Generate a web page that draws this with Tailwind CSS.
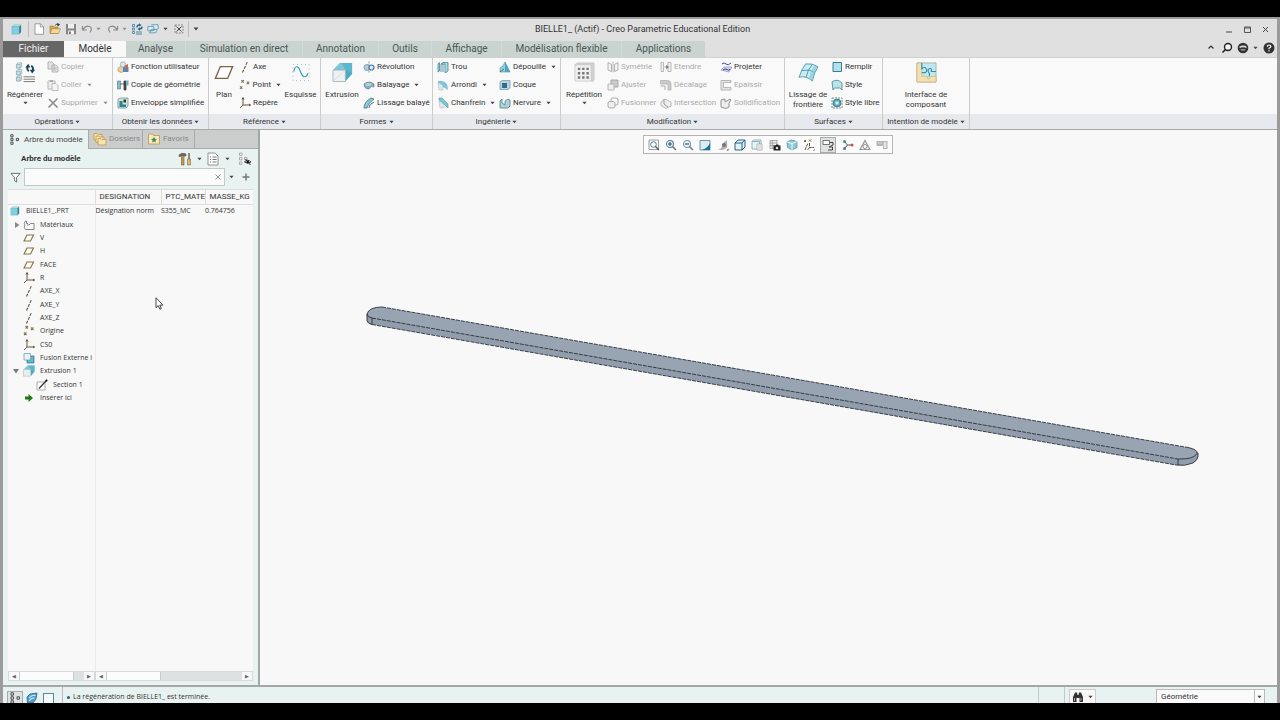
<!DOCTYPE html>
<html lang="fr">
<head>
<meta charset="utf-8">
<title>BIELLE1_ (Actif) - Creo Parametric Educational Edition</title>
<script src="https://cdn.jsdelivr.net/npm/@tailwindcss/browser@4"></script>
</head>
<body class="h-screen overflow-hidden bg-black py-[17px] font-[Roboto,'Noto_Sans',sans-serif] text-[8px] leading-[10px] text-[#333]">

<!-- Icon library -->
<svg class="hidden" aria-hidden="true">
  <symbol id="caret" viewBox="0 0 6 4"><path d="M.5.5h5L3 3.500z" fill="#444"/></symbol>
  <symbol id="cube" viewBox="0 0 12 12"><path d="M1 3l2-2h8l-2 2z" fill="#b9e6ef" stroke="#5aa9bd" stroke-width=".5"/><path d="M1 3h8v8H1z" fill="#7fd0e2" stroke="#5aa9bd" stroke-width=".5"/><path d="M9 3l2-2v8l-2 2z" fill="#2f7f97"/></symbol>
  <symbol id="new" viewBox="0 0 12 12"><path d="M2 .8h5.500l3 3v7.500H2z" fill="#fff" stroke="#888" stroke-width=".8"/><path d="M7.300.8v3.200h3.200" fill="none" stroke="#888" stroke-width=".8"/></symbol>
  <symbol id="open" viewBox="0 0 12 12"><path d="M1 10.500V3h3.500l1 1H9v6.500z" fill="#d9a94c" stroke="#8b6a2c" stroke-width=".5"/><path d="M1 10.500l2-4.800h8.500L9.500 10.500z" fill="#f3d794" stroke="#9a762f" stroke-width=".5"/><path d="M6 2.500Q7 .8 9 1.300M8.300.3l2.500 1.200-2 1.600z" fill="#333" stroke="#333" stroke-width=".5"/></symbol>
  <symbol id="save" viewBox="0 0 12 12"><path d="M1 1h10v10.300H1z" fill="#868686"/><path d="M3 1h6v4.500H3z" fill="#eee"/><path d="M3.200 7.500h5.800v3.800H3.200z" fill="#f4f4f4"/><path d="M4.200 8.500h1.500v2.500H4.200z" fill="#555"/></symbol>
  <symbol id="undo" viewBox="0 0 12 12"><path d="M1.500 3v4h4.300M2 6.500Q5 2 8.500 3.500T9 9.500" fill="none" stroke="#8b8b8b" stroke-width="1.200"/></symbol>
  <symbol id="redo" viewBox="0 0 12 12"><path d="M10.500 3v4H6.200M10 6.500Q7 2 3.500 3.500T3 9.500" fill="none" stroke="#8b8b8b" stroke-width="1.200"/></symbol>
  <symbol id="regen" viewBox="0 0 22 22"><g fill="#c3e3ea" stroke="#7b97a0" stroke-width=".7"><path d="M1.500 2.500h4v4h-4zM1.500 9.500h4v4h-4zM1.500 16h4v4h-4z"/><path d="M1.500 2.500L3 1h4v4L5.500 6.500M1.500 9.500L3 8h4v4l-1.500 1.500M1.500 16L3 14.500h4v4L5.500 20" fill="none"/></g><path d="M9 15.500h12M9 18h12M9 20.500h12" stroke="#777" stroke-width="1"/><path d="M13.500 4.500a3.500 3.500 0 0 0 1 5M18 9.500a3.500 3.500 0 0 0-1-5.500" fill="none" stroke="#17465a" stroke-width="2"/><path d="M10.800 5.800l3.200-4 2 4zM15.500 8h5.500l-3 4z" fill="#17465a"/></symbol>
  <symbol id="regensmall" viewBox="0 0 12 12"><path d="M1.500 1.500h2v2h-2zM1.500 5h2v2h-2zM1.500 8.500h2v2h-2z" fill="#d7edf3" stroke="#3c7f98" stroke-width=".8"/><path d="M5 9h6M5 11h6" stroke="#3c7f98" stroke-width=".9"/><path d="M6 4.500Q6 2 8.500 2M11 3.500Q11 6 8.500 6" fill="none" stroke="#226a88" stroke-width="1.400"/><path d="M8 .3l2.500 1.700L8 3.700zM9 4.300L6.500 6 9 7.700z" fill="#226a88"/></symbol>
  <symbol id="windows" viewBox="0 0 14 12"><path d="M1 3h7v5H1zM5 1h8v5M3 10.500h7l2-4H5z" fill="#d7edf3" stroke="#3c7f98" stroke-width=".8"/></symbol>
  <symbol id="closewin" viewBox="0 0 10 10"><path d="M1 1h8v8H1z" fill="none" stroke="#777" stroke-width=".8" stroke-dasharray="2 1"/><path d="M2.500 2.500l5 5M7.500 2.500l-5 5" stroke="#444" stroke-width="1"/></symbol>
  <symbol id="copy" viewBox="0 0 12 12"><path d="M1 1h4l2 2v5H1zM5 4h4l2 2v5H5z" fill="#e3e3e3" stroke="#b0b0b0" stroke-width=".9"/><path d="M6.500 7h3M6.500 9h3" stroke="#aaa" stroke-width=".7"/></symbol>
  <symbol id="paste" viewBox="0 0 12 12"><path d="M1 2h7v8H1z" fill="#eee" stroke="#b5b5b5"/><path d="M3 1h3v2H3z" fill="#aaa"/><path d="M5 4.500h4l2 2v5H5z" fill="#f4f4f4" stroke="#b0b0b0" stroke-width=".8"/></symbol>
  <symbol id="del" viewBox="0 0 12 12"><path d="M2 2l8.500 8.500M10.500 1.500L1.500 10.500" stroke="#8e8e8e" stroke-width="1.700"/></symbol>
  <symbol id="udf" viewBox="0 0 12 12"><path d="M1 7l3-2 4 1v4l-4 1.500L1 10z" fill="#e9cf9a" stroke="#b38e4a" stroke-width=".6"/><circle cx="6" cy="3.500" r="2.700" fill="#dce6ee" stroke="#7f94a5" stroke-width=".6"/><path d="M6 6h5.500v5H6z" fill="#5b86b8"/><path d="M7 5l4-2v5" fill="#c56a4f"/></symbol>
  <symbol id="cgeom" viewBox="0 0 12 12"><path d="M.5 2h3v8h-3z" fill="#88bac7" stroke="#42616b" stroke-width=".5"/><path d="M3.500 5h4M7 2h2v9H7z" fill="#444" stroke="#444" stroke-width=".8"/><path d="M9.500 1.500h2v5h-2z" fill="#5cb2c9"/></symbol>
  <symbol id="env" viewBox="0 0 12 12"><path d="M1 2l2-1h8v8l-2 2H1z" fill="#d6e6c8" stroke="#5e9aa6" stroke-width=".8"/><path d="M2.500 4h3v3.500H9V10H2.500z" fill="#2d7fa0"/><path d="M6.500 2.500h2.500v3H6.500z" fill="#334"/></symbol>
  <symbol id="plane" viewBox="0 0 22 18"><path d="M7 2.500h13.500L15 15.500H1.500z" fill="#fff" stroke="#7a6546" stroke-width="1.500"/></symbol>
  <symbol id="axis" viewBox="0 0 12 12"><path d="M3.500 11.500L8.500.5" stroke="#5f5540" stroke-width="1.100" stroke-dasharray="3 1.200"/></symbol>
  <symbol id="pts" viewBox="0 0 12 12"><path d="M2.500 1l2.500 2.500M5 1L2.500 3.500M8 2.500l2.500 2.500M10.500 2.500L8 5M1 7.500L3.500 10M3.500 7.500L1 10" stroke="#857651" stroke-width="1.100"/></symbol>
  <symbol id="csys" viewBox="0 0 12 12"><path d="M4 1v7h7.500M4 8l-3 3M3 2.500L4 .5l1 2M10 7l1.500 1-1.500 1" fill="none" stroke="#66563c" stroke-width="1"/></symbol>
  <symbol id="sketch" viewBox="0 0 20 20"><path d="M1 1h18v18H1z" fill="none" stroke="#8aa" stroke-width="1" stroke-dasharray="1 3.500"/><path d="M2 9C3 2 7 2 9 8s5 10 9 3" fill="none" stroke="#3b9ec0" stroke-width="1.300"/></symbol>
  <symbol id="extrude" viewBox="0 0 22 22"><path d="M1 8.500L8 1h13l-7 7.500z" fill="#7cc6d8"/><path d="M14 8.500L21 1v11.500l-7 8z" fill="#4fa9c2"/><path d="M10 1h11v10.500L14 8.500z" fill="#5cb6cc"/><path d="M1 8.500h13V20.500H1z" fill="#eef1f2" stroke="#9aa" stroke-width=".8"/><path d="M1 20.500l13-12" stroke="#cdd6d8" stroke-width=".7"/></symbol>
  <symbol id="revolve" viewBox="0 0 12 12"><circle cx="4" cy="6.500" r="3" fill="#b7cde0" stroke="#6d8cab" stroke-width=".8"/><circle cx="8.500" cy="6.500" r="2.500" fill="#dbe8f5" stroke="#3f79b8" stroke-width="1.200"/><path d="M6 .5v11" stroke="#8a7a55" stroke-width=".8" stroke-dasharray="2 1"/></symbol>
  <symbol id="sweep" viewBox="0 0 12 12"><path d="M1 5q5-4 10 0v3q-3-2-5 2Q1 10 1 5z" fill="#7fb2c0" stroke="#5d7d88" stroke-width=".7"/><ellipse cx="5.500" cy="5.500" rx="3" ry="1.500" fill="#b9cfd5"/></symbol>
  <symbol id="blend" viewBox="0 0 12 12"><path d="M1 11Q1 5 8 1l3 1Q5 6 4 11z" fill="#8ec6d4" stroke="#3f7484" stroke-width=".8"/><path d="M6 11q0-4 5-6" fill="none" stroke="#3f7484"/></symbol>
  <symbol id="hole" viewBox="0 0 12 12"><path d="M1 3l1.500-1.500V10L1 11zM4 3l2-1.500h5V10L9 11.500H8V3z" fill="#a5dbe7" stroke="#39788a" stroke-width=".7"/><path d="M4 3v8M6 3v8" stroke="#39788a" stroke-width=".8"/></symbol>
  <symbol id="round" viewBox="0 0 12 12"><path d="M1 2h4q6 1 6 9L6 8Q6 5 1 4z" fill="#7cc5d6"/><path d="M1 4q5 1 5 4v3H2z" fill="#dfe7ea" stroke="#aab" stroke-width=".5"/></symbol>
  <symbol id="chamf" viewBox="0 0 12 12"><path d="M2 1h3l6 6v4L6 6 2 3z" fill="#7cc5d6" stroke="#4d98ab" stroke-width=".6"/><path d="M2 4l5 4v3H3z" fill="#e1e8ea" stroke="#aab" stroke-width=".5"/></symbol>
  <symbol id="draft" viewBox="0 0 12 12"><path d="M1 11V7l3-2 2-4 5 10z" fill="#8fcfdf" stroke="#4c8d9e" stroke-width=".6"/><path d="M6 1l5 10H6z" fill="#4fa5bb"/><path d="M1 11l4-3" stroke="#766"/></symbol>
  <symbol id="shell" viewBox="0 0 12 12"><path d="M1 3l2-1.500h8V9l-2 1.500H1z" fill="#b3d8e2" stroke="#7d99a4" stroke-width=".8"/><path d="M3 4h5v5H3z" fill="#356a8c"/></symbol>
  <symbol id="rib" viewBox="0 0 12 12"><path d="M1 4l2-2v4l3 2V4l3-2 2 1v6l-2 2H1z" fill="#a9d3dc" stroke="#54808c" stroke-width=".8"/></symbol>
  <symbol id="pattern" viewBox="0 0 22 22"><path d="M1 3l2-2h18v18l-2 2" fill="#d3d3d3" stroke="#c0c0c0" stroke-width=".8"/><path d="M1 3h17v17H1z" fill="#f0f0f0" stroke="#c5c5c5" stroke-width=".8"/><path d="M4 6h2.500v2.500H4zM8.500 6H11v2.500H8.500zM13 6h2.500v2.500H13zM4 10.500h2.500V13H4zM8.500 10.500H11V13H8.500zM13 10.500h2.500V13H13zM4 15h2.500v2.500H4zM8.500 15H11v2.500H8.500zM13 15h2.500v2.500H13z" fill="#777"/></symbol>
  <symbol id="mirror" viewBox="0 0 12 12"><path d="M1 1.500l3.500 2v7L1 9zM11 1.500l-3.500 2v7L11 9z" fill="#f3f3f3" stroke="#aaa" stroke-width=".9"/><path d="M6 .5v11" stroke="#aaa" stroke-width=".8"/></symbol>
  <symbol id="trim" viewBox="0 0 12 12"><path d="M4 1h7v7H4z" fill="#ccc" stroke="#999" stroke-width=".8"/><path d="M1 5h6v6H1z" fill="#eee" stroke="#aaa" stroke-width=".8"/></symbol>
  <symbol id="merge" viewBox="0 0 12 12"><rect x="4" y="1" width="7" height="7" rx="2" fill="none" stroke="#aaa"/><rect x="1" y="4.500" width="7" height="6.500" rx="2" fill="#eee" stroke="#aaa"/></symbol>
  <symbol id="extend" viewBox="0 0 12 12"><path d="M1 1.500h2.500v9H1zM8 1.500h3v9H8z" fill="#f0f0f0" stroke="#aaa" stroke-width=".8"/><path d="M4.500 6h3M6.500 4.500L8.500 6 6.500 7.500z" fill="#777" stroke="#777" stroke-width=".7"/></symbol>
  <symbol id="offset" viewBox="0 0 12 12"><path d="M.5 1.500h7q3.500 0 3.500 3.500v6H8V5H.5z" fill="#ccc" stroke="#aaa" stroke-width=".7"/><path d="M.5 7H5v4" fill="none" stroke="#aaa"/></symbol>
  <symbol id="inter" viewBox="0 0 12 12"><path d="M1 5l4-3 6 3v4l-5 2.500-5-3z" fill="#eee" stroke="#aaa" stroke-width=".8"/><path d="M4 2v5l4 3" fill="none" stroke="#999"/></symbol>
  <symbol id="project" viewBox="0 0 12 12"><path d="M2 3q2-2 4 0t5-1" fill="none" stroke="#3c4fa0" stroke-width="1"/><path d="M1 9l3-3h8L9 11z" fill="#dedff2" stroke="#777bb0" stroke-width=".6"/><path d="M3 9q2-2 4-.5T10 8" fill="none" stroke="#333a80"/></symbol>
  <symbol id="thick" viewBox="0 0 12 12"><path d="M1 1.500h10v2H3.500v5H11v2.500H1z" fill="#e3e3e3" stroke="#aaa" stroke-width=".8"/></symbol>
  <symbol id="solid" viewBox="0 0 12 12"><path d="M1 3l4-1v3l5-3 1 1-2 3v4l-3 1.500L1 10z" fill="#eee" stroke="#888" stroke-width=".9"/></symbol>
  <symbol id="bound" viewBox="0 0 22 22"><path d="M1 16Q4 7 8 2q7-1 13 3-4 5-6 15-6-6-14-4z" fill="#c9ecf3" stroke="#4591a5" stroke-width=".9"/><path d="M4 9q8-2 14 2M8.500 16Q10 8 15 2.500" fill="none" stroke="#4591a5" stroke-width=".9"/><path d="M15 20q2-10 6-15l-3-1.500q-5 5-6.500 13.500z" fill="#79c7d9" opacity=".6"/></symbol>
  <symbol id="fill" viewBox="0 0 12 12"><path d="M2 1.500h8.500v9H2z" fill="#aee1eb" stroke="#3e7d8c" stroke-width="1"/></symbol>
  <symbol id="style" viewBox="0 0 12 12"><path d="M1 3q5-4 10 1v7Q9 8 6 9q-3-1-4 2z" fill="#b9e4ec" stroke="#538c9a" stroke-width=".9"/></symbol>
  <symbol id="free" viewBox="0 0 12 12"><path d="M1 1h10v10H1z" fill="none" stroke="#577" stroke-width=".8" stroke-dasharray="2 1"/><circle cx="6" cy="6" r="4" fill="#59a9bd" stroke="#2f6b7c" stroke-width=".7"/><path d="M4.500 4.500h3v3h-3z" fill="#d6eef3"/></symbol>
  <symbol id="puzzle" viewBox="0 0 22 22"><path d="M1 1h20v20H1z" fill="#bfe9f1" stroke="#8fa79d" stroke-width=".8"/><path d="M1 1h5v14h6q-1 3 1 3t1-3h7v6H1z" fill="#f4dfae" stroke="#c9ad70" stroke-width=".6"/><path d="M6 1v6q4-3 5 1t-5 3M21 10h-5q1-4-2-3t0 5v3" fill="none" stroke="#3d8ea4" stroke-width="1.200"/></symbol>
  <symbol id="tree" viewBox="0 0 12 12"><path d="M2 .8h2.400v2.400H2zM2 4.800h2.400v2.400H2zM2 8.800h2.400v2.400H2zM8 4.800h2.400v2.400H8z" fill="#fff" stroke="#444" stroke-width="1"/></symbol>
  <symbol id="folders" viewBox="0 0 14 14"><g fill="#f6e3b2" stroke="#c39541" stroke-width=".8"><path d="M1 1.500h3l1 1h4V8H1z"/><path d="M3 4h3l1 1h4v5.500H3z"/><path d="M5 6.500h3l1 1h4V13H5z"/></g></symbol>
  <symbol id="fav" viewBox="0 0 14 14"><path d="M1.500 2h4l1 1.500h6V12h-11z" fill="#f8e8bd" stroke="#c39541" stroke-width=".8"/><path d="M7 4.800l.9 2 2.100.2-1.600 1.400.5 2.100L7 9.400l-1.900 1.100.5-2.100L4 7l2.100-.2z" fill="#3f8a68"/></symbol>
  <symbol id="tools" viewBox="0 0 14 14"><path d="M1 3q3-3 7-1v2H6v9H3.500V4.500H1z" fill="#c69a4d" stroke="#6e5630" stroke-width=".6"/><path d="M1 3q3-3 7-1v2H1z" fill="#666"/><path d="M10 1h2v6h-2z" fill="#888"/><path d="M9.500 7h3v6h-3z" fill="#e0b964" stroke="#6e5630" stroke-width=".5"/></symbol>
  <symbol id="list" viewBox="0 0 14 14"><path d="M2 1h7l3 3v9H2z" fill="#fff" stroke="#888" stroke-width=".9"/><path d="M4 5h1M4 7.500h1M4 10h1M6.500 5h4M6.500 7.500h4M6.500 10h4" stroke="#777" stroke-width="1"/></symbol>
  <symbol id="hide" viewBox="0 0 14 14"><path d="M1.500 1h2.400v2.400H1.500zM1.500 5.500h2.400v2.400H1.500zM1.500 10h2.400v2.400H1.500zM6.500 5.500h2.400v2.400H6.500z" fill="#fff" stroke="#999" stroke-width=".8"/><path d="M6.500 10q3-3.500 6.500 0-3 2.500-6.500 0z" fill="#fff" stroke="#222" stroke-width=".9"/><circle cx="9.700" cy="10" r="1.300"/><path d="M7.500 7l5 6" stroke="#222" stroke-width=".9"/></symbol>
  <symbol id="funnel" viewBox="0 0 12 12"><path d="M1 1.500h10L7.200 6v5L5 9.500V6z" fill="#fff" stroke="#666" stroke-width="1"/></symbol>
  <symbol id="material" viewBox="0 0 12 12"><path d="M2.500 10.500q-2.500-2.500-.5-4.500-1.500-1.500 0-3.500L3.500 2v2.500h1.500M2.500 10.500h8.500V4.500H7.500L6 6H4" fill="#fdfdfd" stroke="#777" stroke-width=".9"/></symbol>
  <symbol id="tplane" viewBox="0 0 12 12"><path d="M4 3h6.500L7.500 9H1z" fill="#fffef5" stroke="#857245" stroke-width="1.100"/></symbol>
  <symbol id="fusion" viewBox="0 0 12 12"><path d="M5 4h6v7H4V8h1z" fill="#5eb9d3" stroke="#336f89" stroke-width=".7"/><path d="M1 1.500h6.500V8H1z" fill="#e8f4f7" stroke="#6a97a6" stroke-width=".7"/></symbol>
  <symbol id="section" viewBox="0 0 12 12"><path d="M1 3h8v8H1z" fill="#fff" stroke="#999" stroke-width=".8"/><path d="M3 9.500L10.500 1.500" stroke="#333" stroke-width="1.200"/><circle cx="10.500" cy="1.500" r="1"/></symbol>
  <symbol id="insert" viewBox="0 0 12 12"><path d="M2 4.500h3.500V2l4.500 4-4.500 4V7.500H2z" fill="#1d7a14"/></symbol>
  <symbol id="zoomfit" viewBox="0 0 12 12"><path d="M1 1h9.500v9.500H1z" fill="none" stroke="#888" stroke-width=".8"/><circle cx="5.500" cy="5.500" r="2.800" fill="#fff" stroke="#4b7f96"/><path d="M7.500 7.500l3.500 3.500" stroke="#555" stroke-width="1.300"/></symbol>
  <symbol id="zoomin" viewBox="0 0 12 12"><circle cx="5" cy="5" r="3.500" fill="#e7f3f7" stroke="#4b7f96" stroke-width="1.100"/><path d="M3 5h4M5 3v4" stroke="#205e7c" stroke-width="1.200"/><path d="M7.500 7.500L11 11" stroke="#777" stroke-width="1.500"/></symbol>
  <symbol id="zoomout" viewBox="0 0 12 12"><circle cx="5" cy="5" r="3.500" fill="#e7f3f7" stroke="#7798a5" stroke-width="1.100"/><path d="M3 5h4" stroke="#205e7c" stroke-width="1.200"/><path d="M7.500 7.500L11 11" stroke="#777" stroke-width="1.500"/></symbol>
  <symbol id="repaint" viewBox="0 0 12 12"><path d="M1 1.500h10v9.500H1z" fill="#d9edf4" stroke="#557f91" stroke-width=".8"/><path d="M11 4v7H3q6-2 8-7z" fill="#1f7196"/></symbol>
  <symbol id="render" viewBox="0 0 12 12"><path d="M1 10q4 0 4-3V5l5-4v4q1 3-1 4.500Q5 12 1 10z" fill="#b0b0b0"/><circle cx="7" cy="6" r="2" fill="#777"/><path d="M9.500 11.500h2v-2z" fill="#333"/></symbol>
  <symbol id="views" viewBox="0 0 12 12"><path d="M1 4l3-3h7v7l-3 3H1zM1 4h7v7M8 4l3-3" fill="#dff1f6" stroke="#27657f" stroke-width="1"/></symbol>
  <symbol id="saved" viewBox="0 0 12 12"><path d="M1 2.500L2.500 1H10v5M1 2.500h7.500V10H1z" fill="#e7f4f7" stroke="#7ba6b3" stroke-width=".8"/><path d="M6 5h5v6H6z" fill="#fff" stroke="#999" stroke-width=".7"/><path d="M7 7h3M7 9h3" stroke="#999" stroke-width=".6"/></symbol>
  <symbol id="camera" viewBox="0 0 12 12"><path d="M1 1.500h7v8H1zM1 4h7M1 6.500h7M3.300 1.500v8" fill="#f3f3f3" stroke="#888" stroke-width=".7"/><path d="M4.500 6.500h2l.7-1h2l.6 1h1.700V11.500h-7z" fill="#222"/><circle cx="8" cy="9" r="1.300" fill="#ddd"/></symbol>
  <symbol id="persp" viewBox="0 0 12 12"><path d="M1 3l4-2 6 1.500v6L6 11 1.500 8.500z" fill="#8fc8d8" stroke="#5a93a5" stroke-width=".8"/><path d="M1 3l5 1.500 5-2M6 4.500V11" fill="none" stroke="#fff" stroke-width=".9"/></symbol>
  <symbol id="datum" viewBox="0 0 12 12"><path d="M1 1l2 2M3 1L1 3M6 .5l2 2M8 .5l-2 2" stroke="#857242" stroke-width="1"/><path d="M2 11l3-7M6.500 4v4.500H11M6.500 8.500l-2 2.500" fill="none" stroke="#5c5038" stroke-width="1" stroke-dasharray="3 .7"/><path d="M10 11.500h1.500V10z" fill="#333"/></symbol>
  <symbol id="annot" viewBox="0 0 12 12"><path d="M1 1.500h6.500v4H1z" fill="#fff" stroke="#555" stroke-width=".8"/><path d="M7.500 3.500H11V6L7 8h3.500v3H6" fill="none" stroke="#444" stroke-width="1"/></symbol>
  <symbol id="spin" viewBox="0 0 12 12"><path d="M2 2l3.500 4M5.500 6H10M5.500 6L2 10" stroke="#555" stroke-width="1"/><circle cx="2.500" cy="2.500" r="1.500" fill="#3c9a72"/><circle cx="10" cy="6" r="1.500" fill="#c75050"/><circle cx="2.500" cy="9.500" r="1.500" fill="#4b83a5"/></symbol>
  <symbol id="tri" viewBox="0 0 12 12"><path d="M6 1.500L11 10.500H1z" fill="#eee" stroke="#999" stroke-width="1.200"/><circle cx="6" cy="7.500" r="2" fill="#fff" stroke="#888" stroke-width=".9"/></symbol>
  <symbol id="play" viewBox="0 0 12 12"><path d="M.5 2h11v8H7V7H.5z" fill="#b5b5b5"/><path d="M2 4h4M8 3.500h2v5H8z" stroke="#eee" fill="#ddd" stroke-width=".7"/></symbol>
  <symbol id="web" viewBox="0 0 12 12"><path d="M1 5l3-3 7-1-1 6-3 4H1.500z" fill="#4f9ecb" stroke="#27658e" stroke-width=".8"/><path d="M3 6q3-3.500 6.500-2.500M3.500 9q1-3 5-3" fill="none" stroke="#d5ecf7" stroke-width="1.100"/></symbol>
  <symbol id="binoc" viewBox="0 0 12 12"><path d="M1 11V6l2-4.500h2L5.500 4h1L7 1.500h2L11 6v5H7.500V7h-3v4z" fill="#333"/><path d="M2.500 7v3M9 7v3" stroke="#aaa" stroke-width="1"/></symbol>
</svg>

<div class="flex h-full flex-col border-x-[3px] border-t-2 border-[#9b9b9b] bg-[#f8f8f8]">

  <!-- Title bar -->
  <header class="flex h-[22px] shrink-0 items-center bg-[#e0e0e0] pr-2 pb-0.5">
    <div class="flex w-[216px] items-center">
      <svg class="ml-2 size-[11px]"><use href="#cube"/></svg>
      <span class="ml-1.5 h-4 w-px bg-[#bbb]"></span>
      <button class="ml-1" aria-label="Nouveau"><svg class="size-3"><use href="#new"/></svg></button>
      <button class="ml-1" aria-label="Ouvrir"><svg class="size-3"><use href="#open"/></svg></button>
      <button class="ml-1" aria-label="Enregistrer"><svg class="size-3"><use href="#save"/></svg></button>
      <button class="ml-1 flex items-center gap-[3px]" aria-label="Annuler"><svg class="size-3"><use href="#undo"/></svg><svg class="h-1 w-[5px] opacity-50"><use href="#caret"/></svg></button>
      <button class="ml-1.5 flex items-center gap-[3px]" aria-label="Rétablir"><svg class="size-3"><use href="#redo"/></svg><svg class="h-1 w-[5px] opacity-50"><use href="#caret"/></svg></button>
      <button class="ml-1" aria-label="Régénérer"><svg class="size-3"><use href="#regensmall"/></svg></button>
      <button class="ml-1 flex items-center gap-1" aria-label="Fenêtres"><svg class="h-3 w-3"><use href="#windows"/></svg><svg class="h-1 w-[5px]"><use href="#caret"/></svg></button>
      <button class="ml-1.5" aria-label="Fermer la fenêtre"><svg class="size-2.5"><use href="#closewin"/></svg></button>
      <span class="ml-1 h-4 w-px bg-[#bbb]"></span>
      <button class="ml-1" aria-label="Personnaliser"><svg class="h-1 w-1.5"><use href="#caret"/></svg></button>
    </div>
    <h1 class="flex-1 pr-40 text-center text-[9px]">BIELLE1_ (Actif) - Creo Parametric Educational Edition</h1>
    <div class="flex items-center gap-[11px]">
      <button aria-label="Réduire"><svg class="size-[7px]" viewBox="0 0 7 7"><path d="M0 6h6" stroke="#444"/></svg></button>
      <button aria-label="Agrandir"><svg class="size-[7px]" viewBox="0 0 7 7"><path d="M.5 1h6v5.500h-6z M.5 2h6" fill="none" stroke="#555"/></svg></button>
      <button aria-label="Fermer"><svg class="size-[7px]" viewBox="0 0 7 7"><path d="M1 1l5 5M6 1L1 6" stroke="#444"/></svg></button>
    </div>
  </header>

  <!-- Ribbon tabs -->
  <nav class="flex h-[17px] shrink-0 items-stretch border-b border-[#d0d0d0] bg-[#e0e0e0] text-[10px] text-[#4c5654]">
    <button class="w-[61px] bg-[#666] text-[#eee]">Fichier</button>
    <button class="w-[62px] bg-[#f8f8f8] text-[#333]">Modèle</button>
    <button class="w-[60px] border-r border-[#d3dbd8] bg-[#c9d3d0]">Analyse</button>
    <button class="w-[117px] border-r border-[#d3dbd8] bg-[#c9d3d0]">Simulation en direct</button>
    <button class="w-[76px] border-r border-[#d3dbd8] bg-[#c9d3d0]">Annotation</button>
    <button class="w-[53px] border-r border-[#d3dbd8] bg-[#c9d3d0]">Outils</button>
    <button class="w-[70px] border-r border-[#d3dbd8] bg-[#c9d3d0]">Affichage</button>
    <button class="w-[120px] border-r border-[#d3dbd8] bg-[#c9d3d0]">Modélisation flexible</button>
    <button class="w-[83px] bg-[#c9d3d0]">Applications</button>
    <div class="ml-auto flex items-center gap-1 pr-0.5 pb-[3px]">
      <button aria-label="Réduire le ruban"><svg class="size-2" viewBox="0 0 8 8"><path d="M1.500 4.500L4 2l2.500 2.500" fill="none" stroke="#333" stroke-width="1.200"/></svg></button>
      <button class="ml-0.5" aria-label="Rechercher"><svg class="size-3" viewBox="0 0 12 12"><circle cx="7" cy="5" r="3.500" fill="#f5f5f5" stroke="#222" stroke-width="1.400"/><path d="M4.500 7.500L1.500 10.500" stroke="#222" stroke-width="1.600"/></svg></button>
      <button aria-label="Communauté"><svg class="size-3" viewBox="0 0 12 12"><circle cx="6" cy="6" r="5.300" fill="#333"/><path d="M2.500 4.500q3.500-2 7 0V6q-3.500-1.500-7 0zM3 7.500q3 2 6 0" fill="#ddd"/></svg></button>
      <svg class="h-1 w-[5px]"><use href="#caret"/></svg>
      <button class="ml-px" aria-label="Aide"><svg class="size-3" viewBox="0 0 12 12"><circle cx="6" cy="6" r="5.500" fill="#333"/><path d="M4.300 4.800q0-1.800 1.800-1.800t1.700 1.600Q7.800 5.500 6 6.200v1M6 8.200v1.200" fill="none" stroke="#fff" stroke-width="1.200"/></svg></button>
    </div>
  </nav>

  <!-- Ribbon -->
  <div class="flex h-[72px] shrink-0 border-b border-[#a9a9a9] bg-[#f9f9f9]">
    <section class="flex w-[110px] flex-col border-r border-[#ccc]">
      <div class="flex flex-1">
        <button class="flex w-[44px] flex-col items-center pt-1"><svg class="size-[21px]"><use href="#regen"/></svg><span class="mt-[7px]">Régénérer</span><svg class="mt-px h-1 w-[5px]"><use href="#caret"/></svg></button>
        <div class="flex flex-col text-[#aaa]">
          <button class="flex h-[18px] items-center gap-0.5"><svg class="size-3"><use href="#copy"/></svg>Copier</button>
          <button class="flex h-[18px] items-center gap-0.5"><svg class="size-3"><use href="#paste"/></svg>Coller<svg class="ml-[3px] h-1 w-[5px] opacity-60"><use href="#caret"/></svg></button>
          <button class="flex h-[18px] items-center gap-0.5"><svg class="size-3"><use href="#del"/></svg>Supprimer<svg class="ml-[3px] h-1 w-[5px] opacity-60"><use href="#caret"/></svg></button>
        </div>
      </div>
      <button class="flex h-[15px] items-center justify-center gap-0.5 bg-[#e6e9ee]">Opérations<svg class="h-1 w-[5px]"><use href="#caret"/></svg></button>
    </section>
    <section class="flex w-24 flex-col border-r border-[#ccc]">
      <div class="flex flex-1 flex-col pl-1">
        <button class="flex h-[18px] items-center gap-0.5"><svg class="size-3"><use href="#udf"/></svg>Fonction utilisateur</button>
        <button class="flex h-[18px] items-center gap-0.5"><svg class="size-3"><use href="#cgeom"/></svg>Copie de géométrie</button>
        <button class="flex h-[18px] items-center gap-0.5"><svg class="size-3"><use href="#env"/></svg>Enveloppe simplifiée</button>
      </div>
      <button class="flex h-[15px] items-center justify-center gap-0.5 bg-[#e6e9ee]">Obtenir les données<svg class="h-1 w-[5px]"><use href="#caret"/></svg></button>
    </section>
    <section class="flex w-28 flex-col border-r border-[#ccc]">
      <div class="flex flex-1">
        <button class="flex w-[30px] flex-col items-center pt-1"><svg class="h-[21px] w-5"><use href="#plane"/></svg><span class="mt-[7px]">Plan</span></button>
        <div class="flex w-[42px] flex-col">
          <button class="flex h-[18px] items-center gap-0.5"><svg class="size-3"><use href="#axis"/></svg>Axe</button>
          <button class="flex h-[18px] items-center gap-0.5"><svg class="size-3"><use href="#pts"/></svg>Point<svg class="ml-[3px] h-1 w-[5px]"><use href="#caret"/></svg></button>
          <button class="flex h-[18px] items-center gap-0.5"><svg class="size-3"><use href="#csys"/></svg>Repère</button>
        </div>
        <button class="flex flex-1 flex-col items-center pt-1"><svg class="h-[21px] w-[18px]"><use href="#sketch"/></svg><span class="mt-[7px]">Esquisse</span></button>
      </div>
      <button class="flex h-[15px] items-center justify-center gap-0.5 bg-[#e6e9ee]">Référence<svg class="h-1 w-[5px]"><use href="#caret"/></svg></button>
    </section>
    <section class="flex w-28 flex-col border-r border-[#ccc]">
      <div class="flex flex-1">
        <button class="flex w-[42px] flex-col items-center pt-1"><svg class="size-[21px]"><use href="#extrude"/></svg><span class="mt-[7px]">Extrusion</span></button>
        <div class="flex flex-col">
          <button class="flex h-[18px] items-center gap-0.5"><svg class="size-3"><use href="#revolve"/></svg>Révolution</button>
          <button class="flex h-[18px] items-center gap-0.5"><svg class="size-3"><use href="#sweep"/></svg>Balayage<svg class="ml-[3px] h-1 w-[5px]"><use href="#caret"/></svg></button>
          <button class="flex h-[18px] items-center gap-0.5"><svg class="size-3"><use href="#blend"/></svg>Lissage balayé</button>
        </div>
      </div>
      <button class="flex h-[15px] items-center justify-center gap-0.5 bg-[#e6e9ee]">Formes<svg class="h-1 w-[5px]"><use href="#caret"/></svg></button>
    </section>
    <section class="flex w-32 flex-col border-r border-[#ccc]">
      <div class="flex flex-1 pl-1">
        <div class="flex w-[62px] flex-col">
          <button class="flex h-[18px] items-center gap-0.5"><svg class="size-3"><use href="#hole"/></svg>Trou</button>
          <button class="flex h-[18px] items-center gap-0.5"><svg class="size-3"><use href="#round"/></svg>Arrondi<svg class="ml-[3px] h-1 w-[5px]"><use href="#caret"/></svg></button>
          <button class="flex h-[18px] items-center gap-0.5"><svg class="size-3"><use href="#chamf"/></svg>Chanfrein<svg class="ml-[3px] h-1 w-[5px]"><use href="#caret"/></svg></button>
        </div>
        <div class="flex flex-col">
          <button class="flex h-[18px] items-center gap-0.5"><svg class="size-3"><use href="#draft"/></svg>Dépouille<svg class="ml-[3px] h-1 w-[5px]"><use href="#caret"/></svg></button>
          <button class="flex h-[18px] items-center gap-0.5"><svg class="size-3"><use href="#shell"/></svg>Coque</button>
          <button class="flex h-[18px] items-center gap-0.5"><svg class="size-3"><use href="#rib"/></svg>Nervure<svg class="ml-[3px] h-1 w-[5px]"><use href="#caret"/></svg></button>
        </div>
      </div>
      <button class="flex h-[15px] items-center justify-center gap-0.5 bg-[#e6e9ee]">Ingénierie<svg class="h-1 w-[5px]"><use href="#caret"/></svg></button>
    </section>
    <section class="flex w-56 flex-col border-r border-[#ccc]">
      <div class="flex flex-1">
        <button class="flex w-[46px] flex-col items-center pt-1"><svg class="size-[21px]"><use href="#pattern"/></svg><span class="mt-[7px]">Répétition</span><svg class="mt-px h-1 w-[5px]"><use href="#caret"/></svg></button>
        <div class="flex w-[53px] flex-col text-[#aaa]">
          <button class="flex h-[18px] items-center gap-0.5"><svg class="size-3"><use href="#mirror"/></svg>Symétrie</button>
          <button class="flex h-[18px] items-center gap-0.5"><svg class="size-3"><use href="#trim"/></svg>Ajuster</button>
          <button class="flex h-[18px] items-center gap-0.5"><svg class="size-3"><use href="#merge"/></svg>Fusionner</button>
        </div>
        <div class="flex w-[60px] flex-col text-[#aaa]">
          <button class="flex h-[18px] items-center gap-0.5"><svg class="size-3"><use href="#extend"/></svg>Etendre</button>
          <button class="flex h-[18px] items-center gap-0.5"><svg class="size-3"><use href="#offset"/></svg>Décalage</button>
          <button class="flex h-[18px] items-center gap-0.5"><svg class="size-3"><use href="#inter"/></svg>Intersection</button>
        </div>
        <div class="flex flex-col text-[#aaa]">
          <button class="flex h-[18px] items-center gap-0.5 text-[#333]"><svg class="size-3"><use href="#project"/></svg>Projeter</button>
          <button class="flex h-[18px] items-center gap-0.5"><svg class="size-3"><use href="#thick"/></svg>Epaissir</button>
          <button class="flex h-[18px] items-center gap-0.5"><svg class="size-3"><use href="#solid"/></svg>Solidification</button>
        </div>
      </div>
      <button class="flex h-[15px] items-center justify-center gap-0.5 bg-[#e6e9ee]">Modification<svg class="h-1 w-[5px]"><use href="#caret"/></svg></button>
    </section>
    <section class="flex w-[98px] flex-col border-r border-[#ccc]">
      <div class="flex flex-1">
        <button class="flex w-[46px] flex-col items-center pt-1"><svg class="size-[21px]"><use href="#bound"/></svg><span class="mt-[7px]">Lissage de<br>frontière</span></button>
        <div class="flex flex-col">
          <button class="flex h-[18px] items-center gap-0.5"><svg class="size-3"><use href="#fill"/></svg>Remplir</button>
          <button class="flex h-[18px] items-center gap-0.5"><svg class="size-3"><use href="#style"/></svg>Style</button>
          <button class="flex h-[18px] items-center gap-0.5"><svg class="size-3"><use href="#free"/></svg>Style libre</button>
        </div>
      </div>
      <button class="flex h-[15px] items-center justify-center gap-0.5 bg-[#e6e9ee]">Surfaces<svg class="h-1 w-[5px]"><use href="#caret"/></svg></button>
    </section>
    <section class="flex w-[87px] flex-col border-r border-[#ccc]">
      <div class="flex flex-1 flex-col">
        <button class="flex flex-col items-center pt-1"><svg class="size-[21px]"><use href="#puzzle"/></svg><span class="mt-[7px]">Interface de<br>composant</span></button>
      </div>
      <button class="flex h-[15px] items-center justify-center gap-0.5 bg-[#e6e9ee]">Intention de modèle<svg class="h-1 w-[5px]"><use href="#caret"/></svg></button>
    </section>
    <div class="flex flex-1 flex-col justify-end"><div class="h-[15px] bg-[#e6e9ee]"></div></div>
  </div>

  <div class="flex min-h-0 flex-1">
    <!-- Model tree panel -->
    <aside class="flex w-[257px] shrink-0 flex-col border-r-2 border-[#a3a7a7] bg-[#e8f2f0]">
      <div class="flex h-[19px] shrink-0 bg-[#cbcccc] text-[#888]">
        <button class="flex w-[85px] items-center gap-1 bg-[#e8f2f0] pl-1.5 text-[#444]"><svg class="size-[11px]"><use href="#tree"/></svg>Arbre du modèle</button>
        <button class="flex w-[55px] items-center gap-0.5 border-x border-b border-[#aaa] pl-1"><svg class="size-[14px]"><use href="#folders"/></svg>Dossiers</button>
        <button class="flex w-[52px] items-center gap-0.5 border-r border-b border-[#aaa] pl-1"><svg class="size-[14px]"><use href="#fav"/></svg>Favoris</button>
        <span class="flex-1 border-b border-[#aaa]"></span>
      </div>
      <div class="flex h-[19px] shrink-0 items-center pr-1.5 pl-[18px]">
        <h2 class="flex-1 font-bold">Arbre du modèle</h2>
        <button class="flex items-center gap-[5px]" aria-label="Paramètres"><svg class="size-[14px]"><use href="#tools"/></svg><svg class="h-1 w-[5px]"><use href="#caret"/></svg></button>
        <button class="ml-1 flex items-center gap-[5px]" aria-label="Afficher"><svg class="size-[14px]"><use href="#list"/></svg><svg class="h-1 w-[5px]"><use href="#caret"/></svg></button>
        <button class="ml-2" aria-label="Masquer"><svg class="size-[14px]"><use href="#hide"/></svg></button>
      </div>
      <div class="flex h-[18px] shrink-0 items-center pr-2 pl-[7px]">
        <svg class="size-[11px]"><use href="#funnel"/></svg>
        <div class="ml-[3px] flex h-[18px] flex-1 items-center border border-[#c3c8c8] bg-[#fbfbfb] pr-0.5">
          <input class="h-full min-w-0 flex-1 px-1 outline-none" type="text" aria-label="Filtrer l'arbre">
          <button aria-label="Effacer"><svg class="size-2" viewBox="0 0 8 8"><path d="M1.500 1.500l5 5M6.500 1.500l-5 5" stroke="#888" stroke-width=".9"/></svg></button>
        </div>
        <button class="ml-1" aria-label="Options du filtre"><svg class="h-1 w-[5px]"><use href="#caret"/></svg></button>
        <button class="ml-2" aria-label="Ajouter"><svg class="size-2" viewBox="0 0 8 8"><path d="M4 .5v7M.5 4h7" stroke="#777" stroke-width="1.500"/></svg></button>
      </div>
      <div class="mx-[5px] mt-[3px] mb-0.5 flex min-h-0 flex-1 flex-col bg-[#f8f8f8]">
        <div class="min-h-0 flex-1">
          <table class="h-full w-full table-fixed border-collapse text-left font-['Open_Sans','Noto_Sans',sans-serif] text-[7px] leading-[10px] whitespace-nowrap">
            <colgroup><col class="w-[87px]"><col class="w-[66px]"><col class="w-[44px]"><col></colgroup>
            <thead class="font-[Roboto,'Noto_Sans',sans-serif] text-[8px]"><tr class="h-[15px] border-y border-[#ddd]">
              <th class="border-r border-[#ddd]"></th><th class="overflow-hidden border-r border-[#ddd] pl-1 font-normal">DESIGNATION</th><th class="overflow-hidden border-r border-[#ddd] pl-1 font-normal">PTC_MATE</th><th class="overflow-hidden pl-1 font-normal">MASSE_KG</th>
            </tr></thead>
            <tbody class="[&_td]:overflow-hidden [&_td]:p-0 [&_td:first-child]:border-r [&_td:first-child]:border-[#ececec] [&_tr]:h-[13px] [&_tr:nth-child(3n+2)]:h-[14px]">
              <tr><td><span class="flex items-center gap-1.5 pl-0.5"><svg class="size-2.5"><use href="#cube"/></svg>BIELLE1_.PRT</span></td><td>Désignation norm</td><td>S355_MC</td><td>0.764756</td></tr>
              <tr><td><span class="flex items-center gap-[5px] pl-1.5"><svg class="-mr-0.5 size-[6px]" viewBox="0 0 6 6"><path d="M1 0l4.500 3L1 6z" fill="#888"/></svg><svg class="size-3"><use href="#material"/></svg>Matériaux</span></td><td></td><td></td><td></td></tr>
              <tr><td><span class="flex items-center gap-[5px] pl-[15px]"><svg class="size-3"><use href="#tplane"/></svg>V</span></td><td></td><td></td><td></td></tr>
              <tr><td><span class="flex items-center gap-[5px] pl-[15px]"><svg class="size-3"><use href="#tplane"/></svg>H</span></td><td></td><td></td><td></td></tr>
              <tr><td><span class="flex items-center gap-[5px] pl-[15px]"><svg class="size-3"><use href="#tplane"/></svg>FACE</span></td><td></td><td></td><td></td></tr>
              <tr><td><span class="flex items-center gap-[5px] pl-[15px]"><svg class="size-3"><use href="#csys"/></svg>R</span></td><td></td><td></td><td></td></tr>
              <tr><td><span class="flex items-center gap-[5px] pl-[15px]"><svg class="size-3"><use href="#axis"/></svg>AXE_X</span></td><td></td><td></td><td></td></tr>
              <tr><td><span class="flex items-center gap-[5px] pl-[15px]"><svg class="size-3"><use href="#axis"/></svg>AXE_Y</span></td><td></td><td></td><td></td></tr>
              <tr><td><span class="flex items-center gap-[5px] pl-[15px]"><svg class="size-3"><use href="#axis"/></svg>AXE_Z</span></td><td></td><td></td><td></td></tr>
              <tr><td><span class="flex items-center gap-[5px] pl-[15px]"><svg class="size-3"><use href="#pts"/></svg>Origine</span></td><td></td><td></td><td></td></tr>
              <tr><td><span class="flex items-center gap-[5px] pl-[15px]"><svg class="size-3"><use href="#csys"/></svg>CS0</span></td><td></td><td></td><td></td></tr>
              <tr><td><span class="flex items-center gap-[5px] pl-[15px]"><svg class="size-3 shrink-0"><use href="#fusion"/></svg>Fusion Externe i</span></td><td></td><td></td><td></td></tr>
              <tr><td><span class="flex items-center gap-[5px] pl-[5px]"><svg class="-mr-px size-[6px]" viewBox="0 0 6 6"><path d="M0 1h6L3 5.500z" fill="#777"/></svg><svg class="size-3"><use href="#extrude"/></svg>Extrusion 1</span></td><td></td><td></td><td></td></tr>
              <tr><td><span class="flex items-center gap-[5px] pl-7"><svg class="size-3"><use href="#section"/></svg>Section 1</span></td><td></td><td></td><td></td></tr>
              <tr><td><span class="flex items-center gap-[5px] pl-[15px]"><svg class="size-3"><use href="#insert"/></svg>Insérer ici</span></td><td></td><td></td><td></td></tr>
              <tr class="h-auto!"><td></td><td></td><td></td><td></td></tr>
            </tbody>
          </table>
        </div>
        <div class="flex h-2.5 shrink-0 text-[#666]">
          <div class="flex w-[87px] border border-[#d5dada] bg-[#dde1e1]"><span class="w-2.5 bg-[#f8f8f8] text-center text-[5px] leading-2">◀</span><span class="w-[55px] border-x border-[#ccc] bg-[#fcfcfc]"></span><span class="flex-1"></span><span class="w-2.5 bg-[#f8f8f8] text-center text-[5px] leading-2">▶</span></div>
          <div class="flex flex-1 border border-[#d5dada] bg-[#dde1e1]"><span class="w-2.5 bg-[#f8f8f8] text-center text-[5px] leading-2">◀</span><span class="w-[55px] border-x border-[#ccc] bg-[#fcfcfc]"></span><span class="flex-1"></span><span class="w-2.5 bg-[#f8f8f8] text-center text-[5px] leading-2">▶</span></div>
        </div>
        <div class="h-0.5 shrink-0 bg-[#e8f2f0]"></div>
      </div>
    </aside>

    <!-- Graphics area -->
    <main class="relative flex-1 bg-[#f8f8f8]">
      <svg class="absolute inset-0 h-full w-full" viewBox="260 130 1017 555" role="img" aria-label="Bielle en perspective">
        <path d="M367 314V321Q368 323.500 372 324.500L1176 465Q1185 466.500 1193 463 1198 460 1198 456V452z" fill="#929dab"/>
        <path d="M382 307L1188 447.500Q1198 449.500 1197 453.500 1194 459.500 1178 459L372 318Q367 317 367 314 369 307 382 307z" fill="#98a4b2"/>
        <g fill="none" stroke="#2a303a" stroke-width=".9">
          <path d="M372 318Q367 317 367 314 369 307 382 307M1188 447.500Q1198 449.500 1197 453.500 1194 459.500 1178 459V465M367 314V321Q368 323.500 372 324.500V318M1176 465Q1185 466.500 1193 463 1198 460 1198 456V453"/>
          <path d="M382 307L1188 447.500M372 318L1178 459M372 324.500L1176 465" stroke-dasharray="4 1"/>
        </g>
      </svg>
      <div class="absolute top-[5px] left-[383px] flex h-[19px] w-[250px] items-center justify-around border border-[#b5b5b5] bg-[#fbfbfb] px-px">
        <button aria-label="Réajuster"><svg class="size-3"><use href="#zoomfit"/></svg></button>
        <button aria-label="Zoom avant"><svg class="size-3"><use href="#zoomin"/></svg></button>
        <button aria-label="Zoom arrière"><svg class="size-3"><use href="#zoomout"/></svg></button>
        <button aria-label="Redessiner"><svg class="size-3"><use href="#repaint"/></svg></button>
        <button aria-label="Rendu"><svg class="size-3"><use href="#render"/></svg></button>
        <button aria-label="Style d'affichage"><svg class="size-3"><use href="#views"/></svg></button>
        <button aria-label="Orientations"><svg class="size-3"><use href="#saved"/></svg></button>
        <button aria-label="Gestionnaire de vues"><svg class="size-3"><use href="#camera"/></svg></button>
        <button aria-label="Perspective"><svg class="size-3"><use href="#persp"/></svg></button>
        <button aria-label="Références"><svg class="size-3"><use href="#datum"/></svg></button>
        <button class="border border-[#aaa] bg-[#dde3e2] p-px" aria-label="Annotations"><svg class="size-3"><use href="#annot"/></svg></button>
        <button aria-label="Centre de rotation"><svg class="size-3"><use href="#spin"/></svg></button>
        <button aria-label="Simulation"><svg class="size-3"><use href="#tri"/></svg></button>
        <button aria-label="Animation"><svg class="size-3"><use href="#play"/></svg></button>
      </div>
    </main>
  </div>

  <!-- Status bar -->
  <footer class="flex h-[18px] shrink-0 items-start overflow-hidden border-t-2 border-[#a3a7a7] bg-[#e8f2f0]">
    <div class="flex items-start pt-1 pl-1">
      <button class="border border-[#aaa] bg-[#dde3e2] px-px" aria-label="Arbre du modèle"><svg class="size-3"><use href="#tree"/></svg></button>
      <button class="ml-[3px] pt-px" aria-label="Navigateur"><svg class="size-3"><use href="#web"/></svg></button>
      <button class="mt-0.5 ml-[5px] h-3 w-[11px] border border-[#5d8796] bg-[#f5fbfc]" aria-label="Plein écran"></button>
    </div>
    <p class="ml-2 flex h-full flex-1 items-center gap-[3px] border-l border-[#bbb] pt-1 pl-1 font-['Open_Sans','Noto_Sans',sans-serif] text-[7px] leading-[12px]"><span class="size-[3px] rounded-full bg-[#24607c]"></span>La régénération de BIELLE1_ est terminée.</p>
    <span class="h-full w-[27px] border-x border-[#c3c8c8]"></span>
    <button class="mt-0.5 ml-1 flex h-4 items-center gap-1 border border-[#ccc] bg-[#f8f8f8] px-0.5" aria-label="Rechercher"><svg class="size-3"><use href="#binoc"/></svg><svg class="h-1 w-[5px]"><use href="#caret"/></svg></button>
    <div class="mt-0.5 mr-3 ml-[60px] flex h-[15px] w-[109px] items-center border border-[#bbb] bg-[#fafafa]">
      <select class="h-full min-w-0 flex-1 appearance-none px-1 outline-none" aria-label="Filtre de sélection"><option>Géométrie</option></select>
      <span class="flex h-full w-2.5 items-center justify-center border-l border-[#bbb]"><svg class="h-1 w-[5px]"><use href="#caret"/></svg></span>
    </div>
  </footer>
</div>

<!-- Mouse pointer -->
<svg class="absolute top-[297px] left-[155px] h-[13px] w-[9px]" viewBox="0 0 9 13" aria-hidden="true"><path d="M1 .8v10l2.300-2.200 1.600 3.600 1.500-.7-1.600-3.400H8z" fill="#fff" stroke="#333" stroke-width=".9"/></svg>
</body>
</html>
